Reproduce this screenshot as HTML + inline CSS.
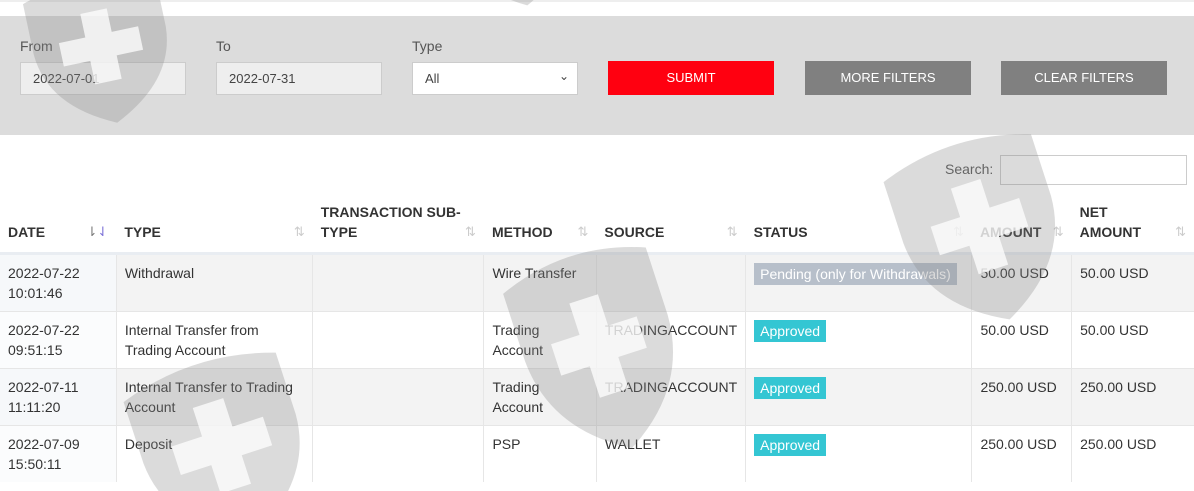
<!DOCTYPE html>
<html><head><meta charset="utf-8"><style>
*{box-sizing:border-box;margin:0;padding:0}
body{width:1194px;height:491px;overflow:hidden;background:#fff;font-family:"Liberation Sans",sans-serif;font-size:14px;color:#333;position:relative}
.topline{position:absolute;left:0;top:0;width:1194px;height:2px;background:#eee}
.panel{position:absolute;left:0;top:16px;width:1194px;height:119px;background:#dcdcdc}
.lbl{position:absolute;top:38px;font-size:14px;color:#555}
.inp{position:absolute;top:62px;width:166px;height:33px;border:1px solid #ccc;background:#eee;padding:8px 12px;font-size:13px;color:#444}
.sel{background:#fff}
.btn{position:absolute;top:61px;width:166px;height:34px;color:#fff;font-size:13px;text-align:center;line-height:34px}
.search{position:absolute;left:945px;top:161px;font-size:14px;color:#555}
.sbox{position:absolute;left:1000px;top:155px;width:187px;height:30px;border:1px solid #ccc;background:#fff}
table{position:absolute;left:0;top:198px;width:1194px;border-collapse:collapse}
th{text-align:left;font-size:14px;font-weight:bold;color:#333;padding:0 8px 10px;height:55px;vertical-align:bottom;border-bottom:3px solid #e9edf2;position:relative;line-height:20px}
th .s{position:absolute;right:8px;bottom:10px;color:#ccc;font-size:13px;font-weight:normal}
td{vertical-align:top;padding:8px 8px;height:57px;font-size:14px;line-height:20px;border-left:1px solid #e6e6e6;border-top:1px solid #e6e6e6;color:#333}
td:first-child{border-left:none}
tr.g td{background:#f3f3f3}
tr.g td:first-child{background:#f6f8fa}
tr td:first-child{background:#fbfcfd}
.b{display:inline-block;color:#fff;padding:1px 6px;font-size:14px;line-height:20px}
.ap{background:#34c6d3}.pe{background:#b7bfca}
svg.wm{position:absolute;left:0;top:0;pointer-events:none}
</style></head><body>
<div class="topline"></div>
<div class="panel"></div>
<div class="lbl" style="left:20px">From</div>
<div class="lbl" style="left:216px">To</div>
<div class="lbl" style="left:412px">Type</div>
<div class="inp" style="left:20px">2022-07-01</div>
<div class="inp" style="left:216px">2022-07-31</div>
<div class="inp sel" style="left:412px">All<span style="position:absolute;right:8px;top:6px;font-size:12px">&#8964;</span></div>
<div class="btn" style="left:608px;background:#ff0010">SUBMIT</div>
<div class="btn" style="left:805px;background:#808080">MORE FILTERS</div>
<div class="btn" style="left:1001px;background:#808080">CLEAR FILTERS</div>
<div class="search">Search:</div><div class="sbox"></div>
<table>
<colgroup><col style="width:117px"><col style="width:198px"><col style="width:172px"><col style="width:113px"><col style="width:143px"><col style="width:228px"><col style="width:100px"><col style="width:123px"></colgroup>
<tr><th>DATE<span class="s" style="color:#777">⇂<span style="color:#7a6fd6">⇃</span></span></th><th>TYPE<span class="s">⇅</span></th><th>TRANSACTION SUB-<br>TYPE<span class="s">⇅</span></th><th>METHOD<span class="s">⇅</span></th><th>SOURCE<span class="s">⇅</span></th><th>STATUS<span class="s">⇅</span></th><th>AMOUNT<span class="s">⇅</span></th><th>NET<br>AMOUNT<span class="s">⇅</span></th></tr>
<tr class="g"><td>2022-07-22<br>10:01:46</td><td>Withdrawal</td><td></td><td>Wire Transfer</td><td></td><td><span class="b pe">Pending (only for Withdrawals)</span></td><td>50.00 USD</td><td>50.00 USD</td></tr>
<tr><td>2022-07-22<br>09:51:15</td><td>Internal Transfer from<br>Trading Account</td><td></td><td>Trading<br>Account</td><td>TRADINGACCOUNT</td><td><span class="b ap">Approved</span></td><td>50.00 USD</td><td>50.00 USD</td></tr>
<tr class="g"><td>2022-07-11<br>11:11:20</td><td>Internal Transfer to Trading<br>Account</td><td></td><td>Trading<br>Account</td><td>TRADINGACCOUNT</td><td><span class="b ap">Approved</span></td><td>250.00 USD</td><td>250.00 USD</td></tr>
<tr><td>2022-07-09<br>15:50:11</td><td>Deposit</td><td></td><td>PSP</td><td>WALLET</td><td><span class="b ap">Approved</span></td><td>250.00 USD</td><td>250.00 USD</td></tr>
</table>
<svg class="wm" width="1194" height="491">
<defs><g id="sh"><path d="M0,12 Q50,-6 100,12 L100,55 Q98,100 50,125 Q2,100 0,55 Z" fill="#888" fill-opacity="0.3"/><path d="M40,30 H60 V50 H80 V70 H60 V90 H40 V70 H20 V50 H40 Z" fill="#fff" fill-opacity="0.75"/></g></defs>
<use href="#sh" transform="translate(20,-10) rotate(-12) scale(1.35,1.2)"/>
<use href="#sh" transform="translate(430,-140) rotate(-12) scale(1.3,1.3)"/>
<use href="#sh" transform="translate(878,165) rotate(-18) scale(1.55,1.5)"/>
<use href="#sh" transform="translate(497,275) rotate(-18) scale(1.5,1.65)"/>
<use href="#sh" transform="translate(118,385) rotate(-18) scale(1.6,1.5)"/>
</svg>
</body></html>
